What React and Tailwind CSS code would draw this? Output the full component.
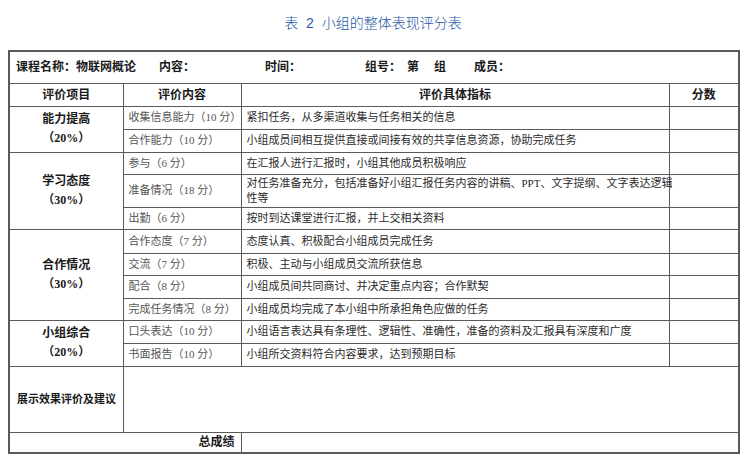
import React from "react";

const groups = [
  {
    name: "能力提高",
    pct: "（20%）",
    items: [
      { item: "收集信息能力（10 分）", desc: "紧扣任务，从多渠道收集与任务相关的信息", h: "h-[23px]" },
      { item: "合作能力（10 分）", desc: "小组成员间相互提供直接或间接有效的共享信息资源，协助完成任务", h: "h-[23px]" },
    ],
  },
  {
    name: "学习态度",
    pct: "（30%）",
    items: [
      { item: "参与（6 分）", desc: "在汇报人进行汇报时，小组其他成员积极响应", h: "h-[22px]" },
      {
        item: "准备情况（18 分）",
        desc: (
          <>
            对任务准备充分，包括准备好小组汇报任务内容的讲稿、PPT、文字提纲、文字表达逻辑
            <br />
            性等
          </>
        ),
        h: "h-[33px]",
      },
      { item: "出勤（6 分）", desc: "按时到达课堂进行汇报，并上交相关资料", h: "h-[22px]" },
    ],
  },
  {
    name: "合作情况",
    pct: "（30%）",
    items: [
      { item: "合作态度（7 分）", desc: "态度认真、积极配合小组成员完成任务", h: "h-[24px]" },
      { item: "交流（7 分）", desc: "积极、主动与小组成员交流所获信息", h: "h-[22px]" },
      { item: "配合（8 分）", desc: "小组成员间共同商讨、并决定重点内容；合作默契", h: "h-[23px]" },
      { item: "完成任务情况（8 分）", desc: "小组成员均完成了本小组中所承担角色应做的任务", h: "h-[22px]" },
    ],
  },
  {
    name: "小组综合",
    pct: "（20%）",
    items: [
      { item: "口头表达（10 分）", desc: "小组语言表达具有条理性、逻辑性、准确性，准备的资料及汇报具有深度和广度", h: "h-[23px]" },
      { item: "书面报告（10 分）", desc: "小组所交资料符合内容要求，达到预期目标", h: "h-[23px]" },
    ],
  },
];

const cell = "border border-[#5a5a5a] p-0 align-middle";

const App = () => {
  return (
    <div
      className="w-[754px] h-[454px] bg-white overflow-hidden"
      style={{ fontFamily: '"Liberation Serif", "Noto Sans CJK SC", serif' }}
    >
      {/* title */}
      <div
        className="h-[50px] pt-[13px] text-center text-[14px] leading-[20px] text-[#1d57a6] pr-[8px] font-light"
        style={{ fontFamily: '"Liberation Sans", "Noto Sans CJK SC", sans-serif' }}
      >
        表&nbsp;&nbsp;2&nbsp;&nbsp;小组的整体表现评分表
      </div>

      <div className="pl-[8px]">
        <table className="table-fixed border-collapse w-[730px] border-2 border-[#5a5a5a]">
          <colgroup>
            <col className="w-[114px]" />
            <col className="w-[118px]" />
            <col className="w-[428px]" />
            <col className="w-[70px]" />
          </colgroup>
          <tbody>
            <tr>
              <td colSpan={4} className={`${cell} h-[32px]`}>
                <div className="flex items-center pl-[6px] text-[12px] font-bold text-[#1a1a1a] whitespace-nowrap">
                  <span className="w-[143px]">课程名称：物联网概论</span>
                  <span className="w-[106px]">内容：</span>
                  <span className="w-[100px]">时间：</span>
                  <span className="w-[42px]">组号：</span>
                  <span className="w-[27px]">第</span>
                  <span className="w-[40px]">组</span>
                  <span>成员：</span>
                </div>
              </td>
            </tr>
            <tr className="text-[12px] font-bold text-[#1a1a1a]">
              <td className={`${cell} h-[23px] text-center`}>评价项目</td>
              <td className={`${cell} text-center`}>评价内容</td>
              <td className={`${cell} text-center`}>评价具体指标</td>
              <td className={`${cell} text-center`}>分数</td>
            </tr>
            {groups.map((g) =>
              g.items.map((it, i) => (
                <tr key={g.name + i}>
                  {i === 0 && (
                    <td
                      rowSpan={g.items.length}
                      className={`${cell} text-center text-[12px] font-bold leading-[19px] text-[#1a1a1a]`}
                    >
                      <div>{g.name}</div>
                      <div>{g.pct}</div>
                    </td>
                  )}
                  <td className={`${cell} ${it.h} pl-[5px] text-[11px] leading-[15px] text-[#555] whitespace-nowrap`}>
                    {it.item}
                  </td>
                  <td className={`${cell} pl-[5px] text-[11px] leading-[15px] text-[#2a2a2a] whitespace-nowrap`}>
                    {it.desc}
                  </td>
                  <td className={cell}></td>
                </tr>
              ))
            )}
            <tr>
              <td className={`${cell} h-[66px] pl-[7px] text-[11px] font-bold text-[#1a1a1a] whitespace-nowrap`}>
                展示效果评价及建议
              </td>
              <td colSpan={3} className={cell}></td>
            </tr>
            <tr>
              <td
                colSpan={2}
                className={`${cell} h-[21px] pr-[6px] text-right text-[12px] font-bold text-[#1a1a1a]`}
              >
                总成绩
              </td>
              <td colSpan={2} className={cell}></td>
            </tr>
          </tbody>
        </table>
      </div>
    </div>
  );
};

export default App;
